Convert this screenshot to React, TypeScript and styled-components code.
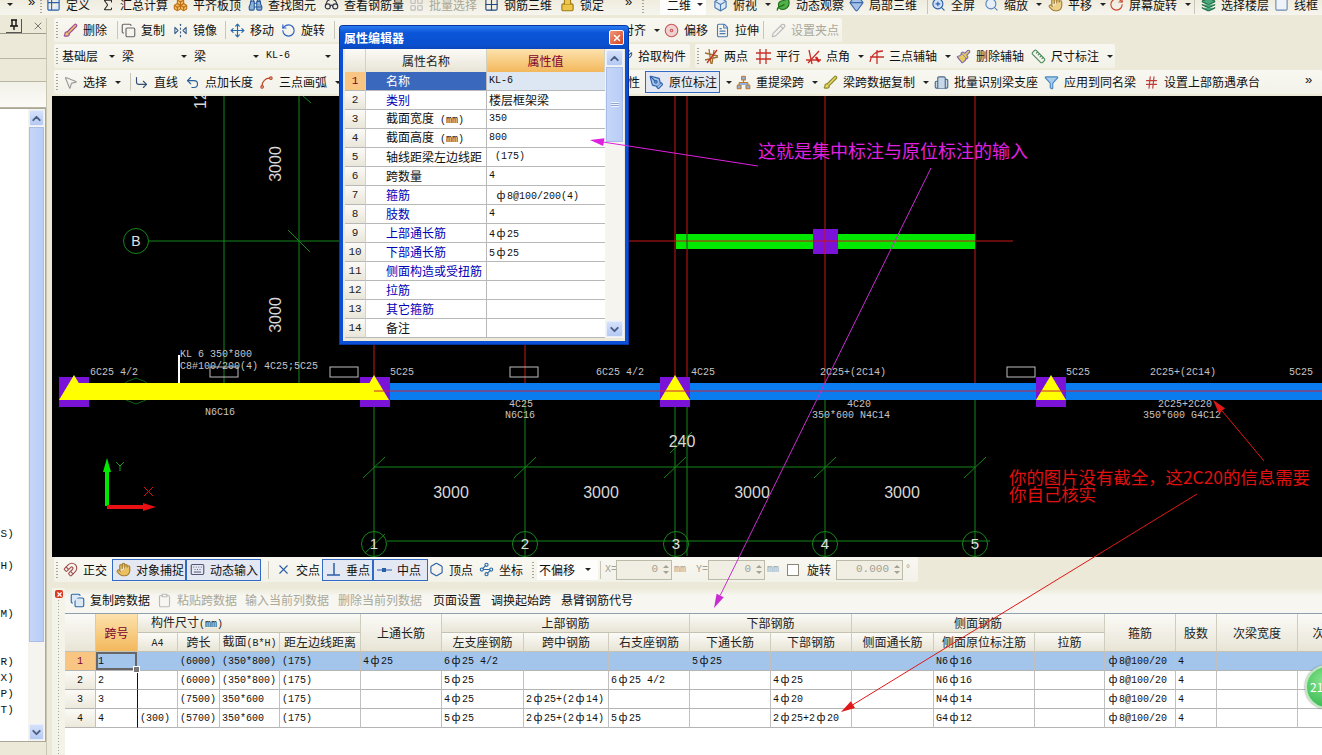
import React from "react";
import styled, { createGlobalStyle } from "styled-components";
import {
  Table2, Sigma, Layers, Binoculars, Glasses, LayoutGrid, Boxes, Lock, Box, Leaf, Gem, ZoomIn, Search, Hand,
  RotateCw, Square, Brush, Copy, FlipHorizontal2, Move, RotateCcw, Disc, FileText, MousePointer2, Undo2,
  Spline, PenTool, Hash, ChevronUp, ChevronDown, X, Paintbrush, Clipboard, Grid2x2, Building2, Ruler, Keyboard, Magnet,
  CornerDownRight, Hexagon, Waypoints, Pencil, Network, Wrench, Filter,
} from "lucide-react";

const Global = createGlobalStyle`
  html, body { margin: 0; padding: 0; background: #ece9d8; }
  body { font: 12px/1 "Noto Sans CJK SC", "Liberation Sans", sans-serif; color: #111; }
`;

const Page = styled.div`
  position: relative;
  width: 1322px;
  height: 755px;
  overflow: hidden;
  display: flex;
  flex-direction: column;
  background: #ece9d8;
`;

const TopRow = styled.div`
  height: 21px;
  margin-top: -6px;
  display: flex;
  align-items: center;
  flex: none;
  background: linear-gradient(#ece9d8, #f6f5ee);
`;

const Body = styled.div`
  flex: 1;
  min-height: 0;
  display: flex;
  margin-top: 3px;
`;

const Side = styled.aside`
  width: 47px;
  flex: none;
  display: flex;
  flex-direction: column;
  border-right: 1px solid #c9c6b4;
  box-sizing: border-box;
`;

const SideHead = styled.div`
  height: 15px;
  display: flex;
  align-items: center;
  justify-content: flex-end;
  gap: 3px;
  padding-right: 2px;
  border-bottom: 1px solid #9d9a88;
  flex: none;
`;

const PinButton = styled.div`
  width: 16px;
  height: 14px;
  box-sizing: border-box;
  border-right: 1px solid #555;
  border-bottom: 1px solid #555;
  display: flex;
  align-items: center;
  justify-content: center;
`;

const SideBand = styled.div<{ $h: number; $light?: boolean }>`
  height: ${(p) => p.$h}px;
  flex: none;
  box-sizing: border-box;
  border-bottom: 1px solid #b8b5a3;
  background: ${(p) => (p.$light ? "linear-gradient(#f2f1e8,#fbfaf6)" : "#ece9d8")};
`;

const SideList = styled.div`
  flex: 1;
  min-height: 0;
  background: #fff;
  display: flex;
  border: 1px solid #a9a796;
  border-left: 0;
  box-sizing: border-box;
  margin-bottom: 13px;
`;

const SideRows = styled.div`
  flex: 1;
  min-width: 0;
  overflow: hidden;
  padding-top: 1px;
`;

const SideRow = styled.div`
  height: 16px;
  line-height: 16px;
  font-family: "Liberation Mono", monospace;
  font-size: 11px;
  text-indent: -6px;
  white-space: nowrap;
`;

const Scroll = styled.div<{ $w: number }>`
  width: ${(p) => p.$w}px;
  flex: none;
  display: flex;
  flex-direction: column;
  background: #f5f4ee;
  gap: 1px;
  padding: 1px;
  box-sizing: border-box;
`;

const ScrollBtn = styled.div`
  height: 16px;
  flex: none;
  background: linear-gradient(#d5e1fa, #b5c9f2);
  border: 1px solid #e6edfb;
  box-sizing: border-box;
  border-radius: 2px;
  display: flex;
  align-items: center;
  justify-content: center;
  color: #4a5e85;
`;

const ScrollThumb = styled.div<{ $h: number }>`
  height: ${(p) => p.$h}px;
  flex: none;
  background: linear-gradient(90deg, #c6d6f8, #b8cdf6);
  border: 1px solid #e6edfb;
  outline: 1px solid #a9bde6;
  outline-offset: -1px;
  box-sizing: border-box;
  display: flex;
  align-items: center;
  justify-content: center;
`;

const ThumbGrip = styled.div`
  width: 8px;
  height: 5px;
  background: repeating-linear-gradient(#eef3fd 0 1px, #8ea6d8 1px 2px);
`;

const ScrollFill = styled.div`
  flex: 1;
`;

const Main = styled.main`
  flex: 1;
  min-width: 0;
  display: flex;
  flex-direction: column;
  padding-left: 5px;
`;

const BarRow = styled.div<{ $h: number; $gap?: number }>`
  height: ${(p) => p.$h}px;
  flex: none;
  display: flex;
  align-items: stretch;
  gap: ${(p) => p.$gap ?? 0}px;
  padding-left: 2px;
  margin-bottom: 2px;
`;

const Band = styled.div<{ $grow?: boolean; $pr?: number }>`
  display: flex;
  align-items: center;
  flex: ${(p) => (p.$grow ? 1 : "none")};
  padding-right: ${(p) => p.$pr ?? 0}px;
  background: linear-gradient(#f8f7f1, #f3f2e9);
  border-radius: 2px;
`;

const Grip = styled.div<{ $w?: number }>`
  width: ${(p) => p.$w ?? 8}px;
  flex: none;
  align-self: center;
  height: 16px;
  box-sizing: border-box;
  margin-left: 2px;
  margin-right: ${(p) => (p.$w ? 0 : -2)}px;
  background: repeating-linear-gradient(#a7a594 0 1px, transparent 1px 3px) left center / 2px 100% no-repeat;
`;

const Sep = styled.div<{ $w: number }>`
  width: ${(p) => p.$w}px;
  flex: none;
  align-self: center;
  height: 18px;
  background: linear-gradient(#c8c6b6, #c8c6b6) center / 1px 100% no-repeat;
`;

const Spacer = styled.div<{ $w: number }>`
  width: ${(p) => p.$w}px;
  flex: none;
`;

const Item = styled.div<{ $w: number; $off?: boolean; $on?: boolean }>`
  width: ${(p) => p.$w}px;
  flex: none;
  box-sizing: border-box;
  display: flex;
  align-items: center;
  gap: 4px;
  height: 100%;
  white-space: nowrap;
  color: ${(p) => (p.$off ? "#a9a899" : "#111")};
  ${(p) => (p.$on ? `background:#e4e8f2; border:1px solid #316ac5; height:22px; padding-left:2px;` : "")}
`;

const IconBox = styled.span`
  width: 17px;
  height: 17px;
  flex: none;
  display: flex;
  align-items: center;
  justify-content: center;
`;

const Caret = styled.i<{ $ml?: number }>`
  width: 0;
  height: 0;
  flex: none;
  margin-left: ${(p) => p.$ml ?? 4}px;
  border-left: 3px solid transparent;
  border-right: 3px solid transparent;
  border-top: 3px solid #222;
`;

const More = styled.span<{ $w: number }>`
  width: ${(p) => p.$w}px;
  flex: none;
  font-size: 13px;
  font-family: "Liberation Sans", sans-serif;
  position: relative;
  top: -3px;
`;

const DropDown = styled.div<{ $w: number; $white?: boolean; $pr?: number; $pl?: number }>`
  width: ${(p) => p.$w}px;
  flex: none;
  box-sizing: border-box;
  display: flex;
  align-items: center;
  justify-content: space-between;
  height: 20px;
  white-space: nowrap;
  padding-right: ${(p) => p.$pr ?? 7}px;
  padding-left: ${(p) => p.$pl ?? (p.$white ? 2 : 0)}px;
  background: ${(p) => (p.$white ? "#fdfdfb" : "transparent")};
`;

const Spin = styled.div<{ $w: number }>`
  width: ${(p) => p.$w}px;
  height: 20px;
  flex: none;
  box-sizing: border-box;
  border: 1px solid #bcbaa9;
  background: #f1efe4;
  color: #a3a193;
  font-family: "Liberation Mono", monospace;
  font-size: 11px;
  display: flex;
  align-items: center;
  justify-content: flex-end;
  gap: 5px;
  padding-right: 2px;
`;

const SpinArrows = styled.span`
  display: flex;
  flex-direction: column;
  gap: 3px;
  align-items: center;
`;

const UpTri = styled.i`
  width: 0;
  height: 0;
  border-left: 3px solid transparent;
  border-right: 3px solid transparent;
  border-bottom: 3px solid #a3a193;
`;

const DnTri = styled.i`
  width: 0;
  height: 0;
  border-left: 3px solid transparent;
  border-right: 3px solid transparent;
  border-top: 3px solid #a3a193;
`;

const Dim = styled.span<{ $w: number }>`
  width: ${(p) => p.$w}px;
  flex: none;
  font-family: "Liberation Mono", monospace;
  font-size: 10px;
  color: #a3a193;
  white-space: nowrap;
  padding-left: 2px;
  box-sizing: border-box;
`;

const Check = styled.span`
  width: 12px;
  height: 12px;
  flex: none;
  box-sizing: border-box;
  border: 1px solid #8a8878;
  background: #fff;
  margin: 0 8px 0 4px;
`;

const Canvas = styled.svg`
  display: block;
  width: 1270px;
  height: 461px;
  background: #000;
  flex: none;
`;

const Panel = styled.section`
  flex: 1;
  min-height: 0;
  display: flex;
  margin-top: 4px;
  background: #f4f3ea;
`;

const Gutter = styled.div`
  width: 13px;
  flex: none;
  padding: 2px 0 0 3px;
  box-sizing: border-box;
  background: repeating-linear-gradient(#a7a594 0 1px, transparent 1px 3px) 6px 12px / 1px 100% no-repeat;
`;

const CloseDot = styled.div`
  width: 8px;
  height: 8px;
  border-radius: 2px;
  background: #d83a22;
  color: #fff;
  display: flex;
  align-items: center;
  justify-content: center;
`;

const PanelBody = styled.div`
  flex: 1;
  min-width: 0;
  display: flex;
  flex-direction: column;
`;

const PanelBar = styled.div`
  height: 25px;
  flex: none;
  display: flex;
  align-items: center;
  padding: 0 0 1px 4px;
  box-sizing: border-box;
  background: linear-gradient(#ece9d8, #f7f6f0 30%);
`;

const TableWrap = styled.div`
  flex: 1;
  min-height: 0;
  background: #fff;
  overflow: hidden;
  border-top: 1px solid #8ea0ae;
`;

const Grid = styled.table`
  border-collapse: separate;
  border-spacing: 0;
  table-layout: fixed;
  width: 1275px;
  font-size: 12px;
`;

const Th = styled.th<{ $hot?: boolean; $left?: boolean; $pl?: number }>`
  font-weight: 400;
  height: 19px;
  padding: 0;
  padding-left: ${(p) => p.$pl ?? 0}px;
  box-sizing: border-box;
  overflow: hidden;
  white-space: nowrap;
  text-align: ${(p) => (p.$left ? "left" : "center")};
  border-right: 1px solid #cfcdbd;
  border-bottom: 1px solid #c4c2b2;
  color: ${(p) => (p.$hot ? "#800030" : "#222")};
  background: ${(p) => (p.$hot ? "linear-gradient(#fde2ad,#f3b85c)" : "linear-gradient(#fbfaf6,#e8e5d6)")};
`;

const Td = styled.td<{ $sel?: boolean; $edge?: boolean; $num?: boolean; $hot?: boolean; $cur?: boolean }>`
  position: relative;
  height: 19px;
  padding: 1px 0 0 ${(p) => (p.$num ? 0 : 2)}px;
  box-sizing: border-box;
  overflow: ${(p) => (p.$cur ? "visible" : "hidden")};
  white-space: nowrap;
  font-family: "Liberation Mono", monospace;
  font-size: 10px;
  line-height: 14px;
  text-align: ${(p) => (p.$num ? "center" : "left")};
  border-right: 1px solid ${(p) => (p.$edge ? "#111" : "#c0c0c0")};
  border-bottom: 1px solid #b4b4b4;
  color: ${(p) => (p.$hot ? "#800030" : "#111")};
  background: ${(p) =>
    p.$hot ? "#f8c583" : p.$num ? "linear-gradient(#fbfaf6,#ece9dc)" : p.$sel ? "#a3c5ec" : "#fff"};
  ${(p) => (p.$cur ? "box-shadow: inset 0 0 0 2px #666;" : "")}
`;

const Handle = styled.i`
  position: absolute;
  right: -3px;
  bottom: -3px;
  width: 5px;
  height: 5px;
  background: #777;
  border: 1px solid #fff;
  z-index: 2;
`;

const Rebar = styled.span`
  display: inline-block;
  width: 12px;
  text-align: center;
  font-family: "Noto Sans CJK SC", sans-serif;
  font-size: 11px;
  line-height: 1;
`;

const Lat = styled.span`
  font-family: "Liberation Mono", monospace;
  font-size: 10px;
`;

const Dialog = styled.div`
  position: absolute;
  left: 340px;
  top: 26px;
  width: 288px;
  height: 318px;
  box-sizing: border-box;
  z-index: 3;
  background: #ece9d8;
  border: 3px solid #0a4fd6;
  border-top: 0;
  border-radius: 3px 3px 0 0;
  box-shadow: 0 0 0 1px #0636a4;
  display: flex;
  flex-direction: column;
`;

const DialogTitle = styled.div`
  height: 23px;
  flex: none;
  margin: 0 -3px;
  padding: 0 4px 0 4px;
  display: flex;
  align-items: center;
  justify-content: space-between;
  color: #fff;
  font-weight: 700;
  font-size: 12px;
  background: linear-gradient(#2a7bf0, #0a55d8 30%, #0a50d0 80%, #0c47bc);
  border-radius: 3px 3px 0 0;
`;

const CloseX = styled.div`
  width: 13px;
  height: 13px;
  border: 1px solid #fff;
  border-radius: 2px;
  background: linear-gradient(135deg, #ef9a7e, #d6401e);
  color: #fff;
  display: flex;
  align-items: center;
  justify-content: center;
`;

const DialogBody = styled.div`
  flex: 1;
  min-height: 0;
  display: flex;
  padding: 0 1px 3px 2px;
`;

const PropGrid = styled.div`
  width: 260px;
  flex: none;
  background: #fff;
  display: grid;
  grid-template-columns: 21px 121px 118px;
  grid-template-rows: 23px repeat(14, 19px);
`;

const PHead = styled.div<{ $hot?: boolean }>`
  display: flex;
  align-items: center;
  justify-content: center;
  color: ${(p) => (p.$hot ? "#800030" : "#222")};
  background: ${(p) => (p.$hot ? "linear-gradient(#fde2ad,#f3b85c)" : "linear-gradient(#fbfaf6,#e8e5d6)")};
  border-right: 1px solid #d3d1c1;
`;

const PNum = styled.div<{ $hot?: boolean }>`
  display: flex;
  align-items: center;
  justify-content: center;
  font-family: "Liberation Mono", monospace;
  font-size: 11px;
  box-sizing: border-box;
  border-right: 1px solid #d3d1c1;
  border-bottom: 1px solid #b8b8b8;
  color: ${(p) => (p.$hot ? "#800030" : "#222")};
  background: ${(p) => (p.$hot ? "#f8c583" : "linear-gradient(#fbfaf6,#e9e6d9)")};
`;

const PName = styled.div<{ $blue?: boolean; $sel?: boolean }>`
  display: flex;
  align-items: center;
  padding-left: 20px;
  box-sizing: border-box;
  white-space: nowrap;
  overflow: hidden;
  border-right: 1px solid #b8b8b8;
  border-bottom: 1px solid #b8b8b8;
  color: ${(p) => (p.$sel ? "#fff" : p.$blue ? "#0000b8" : "#111")};
  background: ${(p) => (p.$sel ? "#3a68bc" : "#fff")};
`;

const PVal = styled.div<{ $sel?: boolean; $cjk?: boolean }>`
  display: flex;
  align-items: center;
  padding-left: 2px;
  box-sizing: border-box;
  white-space: pre;
  font-family: ${(p) => (p.$cjk ? '"Noto Sans CJK SC", sans-serif' : '"Liberation Mono", monospace')};
  font-size: ${(p) => (p.$cjk ? 12 : 10)}px;
  border-bottom: 1px solid #b8b8b8;
  background: ${(p) => (p.$sel ? "#dde7f4" : "#fff")};
`;

const Overlay = styled.svg`
  position: absolute;
  left: 0;
  top: 0;
  width: 1322px;
  height: 755px;
  z-index: 4;
  pointer-events: none;
`;

const Bubble = styled.div`
  position: absolute;
  left: 1305px;
  top: 665px;
  width: 44px;
  height: 44px;
  box-sizing: border-box;
  border-radius: 50%;
  border: 2px solid #bfe8bf;
  background: radial-gradient(circle at 40% 35%, #86e48c, #3fbd58 70%, #2a9a42);
  box-shadow: 0 0 2px #666;
  z-index: 5;
  color: #fff;
  font-size: 12px;
  display: flex;
  align-items: center;
  padding-left: 3px;
`;

const ic = (C: any, color: string, fill = "none", size = 15) => <C size={size} color={color} fill={fill} strokeWidth={1.8} />;

type Tool = { i?: React.ReactNode; t?: string; w: number; c?: boolean; off?: boolean; on?: boolean };

const Tools = ({ list }: { list: Tool[] }) => (
  <>
    {list.map((x, k) => (
      <Item key={k} $w={x.w} $off={x.off} $on={x.on}>
        {x.i && <IconBox>{x.i}</IconBox>}
        {x.t && <span>{x.t}</span>}
        {x.c && <Caret />}
      </Item>
    ))}
  </>
);

const AxisIcon = ({ v }: { v: number }) => (
  <svg width="17" height="17" viewBox="0 0 17 17" fill="none" stroke="#c8302a" strokeWidth="1.3">
    {v === 0 && <><path d="M2 12L15 9M2 5L15 8M6 1l2 15M11 2l-2 14" stroke="#a07030" /><path d="M4 15L14 2" /></>}
    {v === 1 && <><path d="M1 5h15M1 11h15M5 1v15M11 1v15" /></>}
    {v === 2 && <><path d="M1 12h15M4 2l3 14M3 15L14 3" /><path d="M11 9l3 5" stroke="#d02020" strokeWidth="2.4" /></>}
    {v === 3 && <><path d="M2 14C3 7 8 3 15 3M2 9h14M9 2v14" /></>}
  </svg>
);

const ClippedRow: Tool[] = [
  { i: ic(Table2, "#2a5fa8", "#dce8f6"), t: "定义", w: 54 },
  { i: ic(Sigma, "#222", "none", 14), t: "汇总计算", w: 73 },
  { i: ic(Boxes, "#c0701a", "#f0c060"), t: "平齐板顶", w: 75 },
  { i: ic(Binoculars, "#2b5c99", "#8fb0d8"), t: "查找图元", w: 76 },
  { i: ic(Glasses, "#334"), t: "查看钢筋量", w: 85 },
  { i: ic(LayoutGrid, "#bbb"), t: "批量选择", w: 75, off: true },
  { i: ic(Grid2x2, "#23487e"), t: "钢筋三维", w: 76 },
  { i: ic(Lock, "#a07818", "#ecc648"), t: "锁定", w: 66 },
];

const ViewRow: Tool[] = [
  { i: ic(Box, "#4a7ab0", "#dce8f6"), t: "俯视", w: 63, c: true },
  { i: ic(Leaf, "#1f6f1a", "#4fb04a"), t: "动态观察", w: 73 },
  { i: ic(Gem, "#3d6aa8", "#a6c2ea"), t: "局部三维", w: 77 },
];
const ViewRow2: Tool[] = [
  { i: ic(ZoomIn, "#2a5fa8", "#cfe0f8"), t: "全屏", w: 53 },
  { i: ic(Search, "#5a86b8", "#e6eff9"), t: "缩放", w: 64, c: true },
  { i: ic(Hand, "#a08038", "#ecd08a"), t: "平移", w: 61, c: true },
  { i: ic(RotateCw, "#c84a30"), t: "屏幕旋转", w: 80, c: true },
];

const rebar = (s: string) =>
  s.split(/(ф)/).map((p, i) => (p === "ф" ? <Rebar key={i}>ф</Rebar> : <React.Fragment key={i}>{p}</React.Fragment>));

const props: [string, string, boolean, boolean?][] = [
  ["名称", "KL-6", false],
  ["类别", "楼层框架梁", true, true],
  ["截面宽度", "350", false],
  ["截面高度", "800", false],
  ["轴线距梁左边线距", " (175)", false],
  ["跨数量", "4", false],
  ["箍筋", " ф8@100/200(4)", true],
  ["肢数", "4", true],
  ["上部通长筋", "4ф25", true],
  ["下部通长筋", "5ф25", true],
  ["侧面构造或受扭筋", "", true],
  ["拉筋", "", true],
  ["其它箍筋", "", true],
  ["备注", "", false],
];

const cols = [31, 42, 40, 42, 60, 81, 81, 82, 85, 81, 81, 81, 82, 101, 70, 71, 41, 81, 42];

const rows: string[][] = [
  ["1", "", "(6000)", "(350*800)", "(175)", "4ф25", "6ф25 4/2", "", "", "5ф25", "", "", "N6ф16", "", "ф8@100/20", "4", "", ""],
  ["2", "", "(6000)", "(350*800)", "(175)", "", "5ф25", "", "6ф25 4/2", "", "4ф25", "", "N6ф16", "", "ф8@100/20", "4", "", ""],
  ["3", "", "(7500)", "350*600", "(175)", "", "4ф25", "2ф25+(2ф14)", "", "", "4ф20", "", "N4ф14", "", "ф8@100/20", "4", "", ""],
  ["4", "(300)", "(5700)", "350*600", "(175)", "", "5ф25", "2ф25+(2ф14)", "5ф25", "", "2ф25+2ф20", "", "G4ф12", "", "ф8@100/20", "4", "", ""],
];

const sideRows: Record<number, string> = { 26: "(S)", 28: "(H)", 31: "(M)", 34: "(R)", 35: "(X)", 36: "(P)", 37: "(T)" };

const SmallText = ({ x, y, children, fill = "#c4c4c4" }: any) => (
  <text x={x} y={y} fill={fill} fontFamily="Liberation Mono, monospace" fontSize="10">{children}</text>
);
const Dimm = ({ x, y, t, size = 16, rot }: any) => (
  <text x={x} y={y} fill="#d8d8d8" fontFamily="Liberation Sans, sans-serif" fontSize={size} textAnchor="middle"
    transform={rot ? `rotate(-90 ${x} ${y})` : undefined}>{t}</text>
);
const G = "#15861a";
const R = "#c81616";
const Support = ({ x }: { x: number }) => (
  <>
    <rect x={x} y={377} width={30} height={30} fill="#7a12d8" />
    <polygon points={`${x + 15},375 ${x + 30},400 ${x},400`} fill="#ffff00" />
  </>
);
const Tick = ({ x, y }: { x: number; y: number }) => <line x1={x - 11} y1={y + 11} x2={x + 11} y2={y - 10} stroke={G} />;
const Bub = ({ x, t }: { x: number; t: string }) => (
  <>
    <circle cx={x} cy={544} r={12.5} fill="none" stroke={G} />
    <text x={x} y={549} textAnchor="middle" fill="#e0e0e0" fontFamily="Liberation Sans, sans-serif" fontSize="15">{t}</text>
  </>
);

const Arrow = ({ a, b, c, d, color, w = 1 }: { a: number; b: number; c: number; d: number; color: string; w?: number }) => {
  const l = Math.hypot(c - a, d - b), ux = (c - a) / l, uy = (d - b) / l;
  const bx = c - ux * 14, by = d - uy * 14;
  return (
    <>
      <line x1={a} y1={b} x2={bx} y2={by} stroke={color} strokeWidth={w} />
      <polygon points={`${c},${d} ${bx - uy * 4},${by + ux * 4} ${bx + uy * 4},${by - ux * 4}`} fill={color} />
    </>
  );
};

export default function App() {
  return (
    <>
      <Global />
      <Page>
        <TopRow>
          <Item $w={28}><Spacer $w={3} /><Caret $ml={0} /></Item>
          <More $w={10}>»</More>
          <Grip $w={5} />
          <Tools list={ClippedRow} />
          <More $w={15}>»</More>
          <Grip $w={5} />
          <Spacer $w={13} />
          <DropDown $w={46} $white $pr={3} $pl={7}><span>二维</span><Caret /></DropDown>
          <Spacer $w={6} />
          <Tools list={ViewRow} />
          <Sep $w={5} />
          <Tools list={ViewRow2} />
          <Sep $w={12} />
          <Tools list={[
            { i: ic(Layers, "#1f6a48", "#4aa87c"), t: "选择楼层", w: 73 },
            { i: ic(Square, "#6a8ab0", "#eef3f9"), t: "线框", w: 49 },
          ]} />
        </TopRow>
        <Body>
          <Side>
            <SideHead>
              <PinButton>
                <svg width="10" height="12" viewBox="0 0 10 12" fill="none" stroke="#111" strokeWidth="1.4">
                  <path d="M2 1h6M3 1v6h4V1M1 7h8M5 7v4" />
                </svg>
              </PinButton>
              <Spacer $w={4} />
              <X size={12} color="#444" strokeWidth={1.4} />
            </SideHead>
            <SideBand $h={25} />
            <SideBand $h={23} />
            <SideBand $h={26} $light />
            <SideList>
              <SideRows>
                {Array.from({ length: 39 }, (_, i) => <SideRow key={i}>{sideRows[i] ?? ""}</SideRow>)}
              </SideRows>
              <Scroll $w={17}>
                <ScrollBtn><ChevronUp size={13} strokeWidth={3.5} /></ScrollBtn>
                <ScrollThumb $h={515} />
                <ScrollFill />
                <ScrollBtn><ChevronDown size={13} strokeWidth={3.5} /></ScrollBtn>
              </Scroll>
            </SideList>
          </Side>
          <Main>
            <BarRow $h={24}>
              <Band>
                <Grip />
                <Tools list={[{ i: ic(Brush, "#a04a9a", "#e8c860"), t: "删除", w: 52 }]} />
                <Sep $w={6} />
                <Tools list={[
                  { i: ic(Copy, "#666"), t: "复制", w: 52 },
                  { i: ic(FlipHorizontal2, "#3a5f8a"), t: "镜像", w: 50 },
                ]} />
                <Sep $w={7} />
                <Tools list={[
                  { i: ic(Move, "#2a6aa8"), t: "移动", w: 51 },
                  { i: ic(RotateCcw, "#2a5fc0"), t: "旋转", w: 51 },
                ]} />
                <Sep $w={6} />
                <Spacer $w={285} />
                <Tools list={[
                  { t: "对齐", w: 41, c: true },
                  { i: ic(Disc, "#c85a5a", "#f0d0d0"), t: "偏移", w: 51 },
                  { i: ic(FileText, "#4a7ab0"), t: "拉伸", w: 42 },
                ]} />
                <Sep $w={14} />
                <Tools list={[{ i: ic(Pencil, "#bbb"), t: "设置夹点", w: 72, off: true }]} />
              </Band>
            </BarRow>
            <BarRow $h={24} $gap={5}>
              <Band $pr={1}>
                <Grip />
                <DropDown $w={60}><span>基础层</span><Caret /></DropDown>
                <DropDown $w={72}><span>梁</span><Caret /></DropDown>
                <DropDown $w={72}><span>梁</span><Caret /></DropDown>
                <DropDown $w={72}><Lat>KL-6</Lat><Caret /></DropDown>
                <Spacer $w={279} />
                <Tools list={[{ i: ic(Wrench, "#3a5f8a"), t: "拾取构件", w: 72 }]} />
              </Band>
              <Band>
                <Grip />
                <Tools list={[
                  { i: <AxisIcon v={0} />, t: "两点", w: 52 },
                  { i: <AxisIcon v={1} />, t: "平行", w: 50 },
                  { i: <AxisIcon v={2} />, t: "点角", w: 63, c: true },
                  { i: <AxisIcon v={3} />, t: "三点辅轴", w: 87, c: true },
                  { i: ic(Paintbrush, "#7a6ab0", "#e8c860"), t: "删除辅轴", w: 75 },
                  { i: ic(Ruler, "#4a8a5a"), t: "尺寸标注", w: 85, c: true },
                ]} />
              </Band>
            </BarRow>
            <BarRow $h={24}>
              <Band $grow>
                <Grip />
                <Tools list={[{ i: ic(MousePointer2, "#999"), t: "选择", w: 65, c: true }]} />
                <Sep $w={6} />
                <Tools list={[
                  { i: ic(CornerDownRight, "#34507a"), t: "直线", w: 51 },
                  { i: ic(Undo2, "#2a5f9a"), t: "点加长度", w: 74 },
                  { i: ic(Spline, "#c04020"), t: "三点画弧", w: 90, c: true },
                ]} />
                <Spacer $w={268} />
                <Tools list={[
                  { t: "属性", w: 29 },
                  { i: ic(PenTool, "#2a5fa8", "#a6c2ea"), t: "原位标注", w: 75, on: true },
                ]} />
                <Item $w={15}><Spacer $w={2} /><Caret $ml={0} /></Item>
                <Tools list={[
                  { i: ic(Network, "#c07a30", "#8fb0d8"), t: "重提梁跨", w: 87, c: true },
                  { i: ic(Brush, "#8a8a30", "#ecd860"), t: "梁跨数据复制", w: 111, c: true },
                  { i: ic(Building2, "#4a6a8a", "#c8d8e8"), t: "批量识别梁支座", w: 110 },
                  { i: ic(Filter, "#4a86c0", "#a8cdec"), t: "应用到同名梁", w: 100 },
                  { i: ic(Hash, "#c03a3a"), t: "设置上部筋遇承台", w: 162 },
                ]} />
                <More $w={10}>»</More>
              </Band>
            </BarRow>
            <Canvas viewBox="52 96 1270 461">
              <g fill="none">
                <line x1={224} y1={96} x2={224} y2={400} stroke={G} />
                <line x1={299} y1={96} x2={299} y2={400} stroke={G} />
                <line x1={149} y1={241} x2={340} y2={241} stroke={G} />
                <line x1={288} y1={230} x2={310} y2={252} stroke={G} />
                <line x1={303} y1={96} x2={311} y2={103} stroke={G} />
                <polygon points="136,378 146,382 150,391 146,400 136,404 126,400 122,391 126,382" stroke="#0f5f12" />
                {[374, 525].map((x) => <line key={x} x1={x} y1={96} x2={x} y2={385} stroke={R} />)}
                {[675, 687, 825, 975].map((x) => <line key={x} x1={x} y1={96} x2={x} y2={385} stroke={R} />)}
                {[374, 525, 675, 687, 825, 975].map((x) => <line key={x} x1={x} y1={400} x2={x} y2={556} stroke={G} />)}
                <line x1={374} y1={467} x2={975} y2={467} stroke={G} />
                <line x1={387} y1={541} x2={990} y2={541} stroke={G} />
                {[374, 525, 675, 825, 975].map((x) => <Tick key={x} x={x} y={467} />)}
                <Tick x={681} y={442} />
                <line x1={365} y1={553} x2={385} y2={534} stroke={G} />
              </g>
              <circle cx={136} cy={241} r={12.5} fill="none" stroke={G} />
              <text x={136} y={246} textAnchor="middle" fill="#e0e0e0" fontFamily="Liberation Sans, sans-serif" fontSize="14">B</text>
              <Dimm x={206} y={100} t="12" size={16} rot />
              <Dimm x={281} y={164} t="3000" rot />
              <Dimm x={281} y={315} t="3000" rot />

              <rect x={676} y={234} width={299} height={15} fill="#00e800" />
              <rect x={813} y={229} width={25} height={25} fill="#7a12d8" />
              <line x1={628} y1={241} x2={1013} y2={241} stroke={R} />
              <line x1={825} y1={229} x2={825} y2={254} stroke={R} />
              <line x1={687} y1={234} x2={687} y2={249} stroke="#333" />

              <rect x={390} y={383} width={932} height={17} fill="#0a7cf0" />
              <rect x={59} y={377} width={30} height={30} fill="#7a12d8" />
              <rect x={360} y={377} width={30} height={30} fill="#7a12d8" />
              <rect x={70} y={383} width={305} height={17} fill="#ffff00" />
              <polygon points="74,375 89,400 59,400" fill="#ffff00" />
              <polygon points="374,375 389,400 360,400" fill="#ffff00" />
              <Support x={660} />
              <Support x={1036} />
              <line x1={374} y1={391} x2={1322} y2={391} stroke="#c8243c" />
              <line x1={179} y1={355} x2={179} y2={383} stroke="#fff" strokeWidth={2} />

              <SmallText x={180} y={357}>KL 6 350*800</SmallText>
              <SmallText x={180} y={369}>C8#100/200(4) 4C25;5C25</SmallText>
              <SmallText x={90} y={375}>6C25 4/2</SmallText>
              <SmallText x={390} y={375}>5C25</SmallText>
              <SmallText x={596} y={375}>6C25 4/2</SmallText>
              <SmallText x={691} y={375}>4C25</SmallText>
              <SmallText x={820} y={375}>2C25+(2C14)</SmallText>
              <SmallText x={1066} y={375}>5C25</SmallText>
              <SmallText x={1150} y={375}>2C25+(2C14)</SmallText>
              <SmallText x={1289} y={375}>5C25</SmallText>
              <SmallText x={205} y={415}>N6C16</SmallText>
              <SmallText x={509} y={407}>4C25</SmallText>
              <SmallText x={505} y={418}>N6C16</SmallText>
              <SmallText x={847} y={407}>4C20</SmallText>
              <SmallText x={812} y={418}>350*600 N4C14</SmallText>
              <SmallText x={1158} y={407}>2C25+2C20</SmallText>
              <SmallText x={1143} y={418}>350*600 G4C12</SmallText>
              {[210, 330, 510, 1007].map((x) => <rect key={x} x={x} y={367} width={28} height={10} fill="none" stroke="#bdbdbd" />)}

              <Dimm x={682} y={447} t="240" size={16} />
              {[451, 601, 752, 902].map((x) => <Dimm key={x} x={x} y={498} t="3000" />)}
              <Bub x={374} t="1" /><Bub x={525} t="2" /><Bub x={676} t="3" /><Bub x={825} t="4" /><Bub x={975} t="5" />

              <rect x={105} y={470} width={4} height={36} fill="#00e800" />
              <polygon points="107,458 111,472 103,472" fill="#00e800" />
              <rect x={107} y={505} width={38} height={4} fill="#e81010" />
              <polygon points="156,507 143,503 143,511" fill="#e81010" />
              <path d="M116 462l4 4 4-4M120 466v5" stroke="#1a9a1a" fill="none" />
              <path d="M144 487l9 9M153 487l-9 9" stroke="#c81616" fill="none" />

              <text x={758} y={158} fill="#e020e0" fontSize="18" fontFamily="Noto Sans CJK SC, sans-serif">这就是集中标注与原位标注的输入</text>
              <text x={1009} y={484} fill="#e01010" fontSize="17.4" fontFamily="Noto Sans CJK SC, sans-serif">你的图片没有截全，这2C20的信息需要</text>
              <text x={1009} y={501} fill="#e01010" fontSize="17.4" fontFamily="Noto Sans CJK SC, sans-serif">你自己核实</text>
            </Canvas>
            <BarRow $h={25}>
              <Band>
                <Grip />
                <Tools list={[{ i: ic(Magnet, "#a05050"), t: "正交", w: 50 }]} />
                <Tools list={[{ i: ic(Hand, "#a08038", "#ecc060"), t: "对象捕捉", w: 74, on: true }]} />
                <Tools list={[{ i: ic(Keyboard, "#557"), t: "动态输入", w: 75, on: true }]} />
                <Sep $w={14} />
                <Tools list={[
                  { i: ic(X, "#2a5fa8"), t: "交点", w: 47 },
                  { i: <svg width="17" height="17" viewBox="0 0 17 17"><path d="M9 2v12M2 14h13" stroke="#2a5fa8" strokeWidth="1.5" /></svg>, t: "垂点", w: 51, on: true },
                  { i: <svg width="17" height="17" viewBox="0 0 17 17"><path d="M1 9h15" stroke="#2a5fa8" /><rect x="6" y="7" width="4" height="4" fill="#2a5fa8" /></svg>, t: "中点", w: 55, on: true },
                  { i: ic(Hexagon, "#2a5fa8"), t: "顶点", w: 50 },
                  { i: ic(Waypoints, "#2a6aa8"), t: "坐标", w: 52 },
                ]} />
                <Grip $w={5} />
                <DropDown $w={61} $white><span>不偏移</span><Caret /></DropDown>
                <Sep $w={5} />
                <Dim $w={13}>X=</Dim>
                <Spin $w={56}>0<SpinArrows><UpTri /><DnTri /></SpinArrows></Spin>
                <Dim $w={22}>mm</Dim>
                <Dim $w={14}>Y=</Dim>
                <Spin $w={57}>0<SpinArrows><UpTri /><DnTri /></SpinArrows></Spin>
                <Dim $w={18}>mm</Dim>
                <Check />
                <span>旋转</span>
                <Spacer $w={5} />
                <Spin $w={67}>0.000<SpinArrows><UpTri /><DnTri /></SpinArrows></Spin>
                <Dim $w={15}>°</Dim>
              </Band>
            </BarRow>
            <Panel>
              <Gutter>
                <CloseDot><X size={7} strokeWidth={4} /></CloseDot>
              </Gutter>
              <PanelBody>
                <PanelBar>
                  <Tools list={[
                    { i: ic(Copy, "#2a6aa8", "#dce8f6"), t: "复制跨数据", w: 87 },
                    { i: ic(Clipboard, "#bbb"), t: "粘贴跨数据", w: 89, off: true },
                    { t: "输入当前列数据", w: 93, off: true },
                    { t: "删除当前列数据", w: 95, off: true },
                    { t: "页面设置", w: 58 },
                    { t: "调换起始跨", w: 70 },
                    { t: "悬臂钢筋代号", w: 90 },
                  ]} />
                </PanelBar>
                <TableWrap>
                  <Grid>
                    <colgroup>
                      {cols.map((w, i) => <col key={i} width={w} />)}
                    </colgroup>
                    <thead>
                      <tr>
                        <Th rowSpan={2} />
                        <Th rowSpan={2} $hot>跨号</Th>
                        <Th colSpan={4} $left $pl={13}>构件尺寸<Lat>(mm)</Lat></Th>
                        <Th rowSpan={2}>上通长筋</Th>
                        <Th colSpan={3}>上部钢筋</Th>
                        <Th colSpan={2}>下部钢筋</Th>
                        <Th colSpan={3}>侧面钢筋</Th>
                        <Th rowSpan={2}>箍筋</Th>
                        <Th rowSpan={2}>肢数</Th>
                        <Th rowSpan={2}>次梁宽度</Th>
                        <Th rowSpan={2}>次</Th>
                      </tr>
                      <tr>
                        <Th><Lat>A4</Lat></Th>
                        <Th>跨长</Th>
                        <Th>截面<Lat>(B*H)</Lat></Th>
                        <Th>距左边线距离</Th>
                        <Th>左支座钢筋</Th>
                        <Th>跨中钢筋</Th>
                        <Th>右支座钢筋</Th>
                        <Th>下通长筋</Th>
                        <Th>下部钢筋</Th>
                        <Th>侧面通长筋</Th>
                        <Th>侧面原位标注筋</Th>
                        <Th>拉筋</Th>
                      </tr>
                    </thead>
                    <tbody>
                      {rows.map((r, i) => (
                        <tr key={i}>
                          <Td $num $hot={i === 0}>{i + 1}</Td>
                          {r.map((c, j) => (
                            <Td key={j} $sel={i === 0} $edge={j === 0 && i > 0} $cur={i === 0 && j === 0}>
                              {rebar(c)}
                              {i === 0 && j === 0 && <Handle />}
                            </Td>
                          ))}
                        </tr>
                      ))}
                    </tbody>
                  </Grid>
                </TableWrap>
              </PanelBody>
            </Panel>
          </Main>
        </Body>

        <Dialog>
          <DialogTitle>
            <span>属性编辑器</span>
            <CloseX><X size={10} strokeWidth={3.5} /></CloseX>
          </DialogTitle>
          <DialogBody>
            <PropGrid>
              <PHead />
              <PHead>属性名称</PHead>
              <PHead $hot>属性值</PHead>
              {props.map(([n, v, blue, cjk], i) => (
                <React.Fragment key={i}>
                  <PNum $hot={i === 0}>{i + 1}</PNum>
                  <PName $blue={blue} $sel={i === 0}>
                    <span>{n}{(n === "截面宽度" || n === "截面高度") && <Lat> (mm)</Lat>}</span>
                  </PName>
                  <PVal $sel={i === 0} $cjk={cjk}><span>{rebar(v)}</span></PVal>
                </React.Fragment>
              ))}
            </PropGrid>
            <Scroll $w={19}>
              <ScrollBtn><ChevronUp size={13} strokeWidth={3.5} /></ScrollBtn>
              <ScrollThumb $h={75}><ThumbGrip /></ScrollThumb>
              <ScrollFill />
              <ScrollBtn><ChevronDown size={13} strokeWidth={3.5} /></ScrollBtn>
            </Scroll>
          </DialogBody>
        </Dialog>

        <Overlay viewBox="0 0 1322 755">
          <Arrow a={758} b={166} c={590} d={140} color="#e020e0" />
          <Arrow a={931} b={168} c={714} d={608} color="#c82cd0" />
          <Arrow a={1197} b={494} c={841} d={712} color="#e01818" />
          <Arrow a={1264} b={461} c={1213} d={400} color="#e01818" />
        </Overlay>
        <Bubble>21</Bubble>
      </Page>
    </>
  );
}
